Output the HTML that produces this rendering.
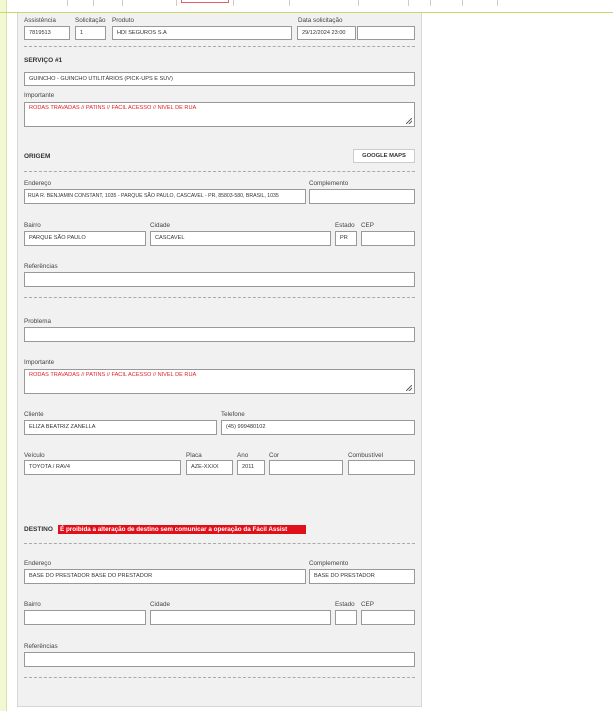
<!DOCTYPE html>
<html><head><meta charset="utf-8"><style>
*{margin:0;padding:0;box-sizing:border-box}
body{width:613px;height:711px;background:#fff;position:relative;overflow:hidden;font-family:"Liberation Sans",sans-serif;font-size:6.5px;color:#333}
.a{position:absolute}
.lbl{position:absolute;font-size:6.3px;color:#444;white-space:nowrap}
.in{position:absolute;background:#fff;border:1px solid #999;font-size:5.6px;color:#333;padding:0 0 0 4px;line-height:13px;white-space:nowrap;overflow:hidden}
.dash{position:absolute;left:24px;width:391px;border-top:1px dashed #aaa;height:0}
.h{position:absolute;font-weight:bold;font-size:6.5px;color:#333}
.red{color:#e0202a}
.grip{position:absolute;right:2px;bottom:2px;width:6px;height:6px;background:linear-gradient(135deg,transparent 45%,#666 45%,#666 55%,transparent 55%,transparent 70%,#666 70%,#666 80%,transparent 80%)}
</style></head><body>
<div class="a" style="left:0;top:0;width:7px;height:711px;background:#f2f8d2;border-right:1px solid #d8e0a8"></div>
<div class="a" style="left:0;top:12px;width:613px;height:1px;background:#c9d86a"></div>
<div class="a" style="left:181px;top:0;width:48px;height:3px;background:#fff;border:1px solid #e46060;border-top:none"></div>
<div class="a" style="left:67px;top:0;width:1px;height:6px;background:#ccc"></div>
<div class="a" style="left:93px;top:0;width:1px;height:6px;background:#ccc"></div>
<div class="a" style="left:122px;top:0;width:1px;height:6px;background:#ccc"></div>
<div class="a" style="left:176px;top:0;width:1px;height:6px;background:#ccc"></div>
<div class="a" style="left:233px;top:0;width:1px;height:6px;background:#ccc"></div>
<div class="a" style="left:289px;top:0;width:1px;height:6px;background:#ccc"></div>
<div class="a" style="left:358px;top:0;width:1px;height:6px;background:#ccc"></div>
<div class="a" style="left:408px;top:0;width:1px;height:6px;background:#ccc"></div>
<div class="a" style="left:430px;top:0;width:1px;height:6px;background:#ccc"></div>
<div class="a" style="left:462px;top:0;width:1px;height:6px;background:#ccc"></div>
<div class="a" style="left:497px;top:0;width:1px;height:6px;background:#ccc"></div>
<div class="a" style="left:17px;top:13px;width:405px;height:694px;background:#f1f1f1;border:1px solid #d6d6d6;border-top:none"></div>

<div class="lbl" style="left:24px;top:17px">Assistência</div>
<div class="lbl" style="left:75px;top:17px">Solicitação</div>
<div class="lbl" style="left:112px;top:17px">Produto</div>
<div class="lbl" style="left:298px;top:17px">Data solicitação</div>
<div class="in" style="left:24px;top:26px;width:46px;height:14px">7819513</div>
<div class="in" style="left:75px;top:26px;width:31px;height:14px">1</div>
<div class="in" style="left:112px;top:26px;width:180px;height:14px">HDI SEGUROS S.A</div>
<div class="in" style="left:297px;top:26px;width:59px;height:14px">29/12/2024 23:00</div>
<div class="in" style="left:357px;top:26px;width:58px;height:14px"></div>
<div class="dash" style="top:46px"></div>
<div class="h" style="left:24px;top:57px">SERVIÇO #1</div>
<div class="in" style="left:24px;top:72px;width:391px;height:14px">GUINCHO - GUINCHO UTILITÁRIOS (PICK-UPS E SUV)</div>
<div class="lbl" style="left:24px;top:92px">Importante</div>
<div class="in red" style="left:24px;top:102px;width:391px;height:25px;line-height:10px">RODAS TRAVADAS // PATINS // FACIL ACESSO // NIVEL DE RUA<div class="grip"></div></div>
<div class="h" style="left:24px;top:153px">ORIGEM</div>
<div class="a" style="left:353px;top:149px;width:62px;height:14px;background:#fff;border:1px solid #ccc;font-weight:bold;font-size:5.8px;text-align:center;line-height:12px">GOOGLE MAPS</div>
<div class="dash" style="top:171px"></div>
<div class="lbl" style="left:24px;top:180px">Endereço</div>
<div class="lbl" style="left:309px;top:180px">Complemento</div>
<div class="in" style="left:24px;top:189px;width:282px;height:15px;font-size:5.2px;padding-left:3px">RUA R. BENJAMIN CONSTANT, 1035 - PARQUE SÃO PAULO, CASCAVEL - PR, 85803-580, BRASIL, 1035</div>
<div class="in" style="left:309px;top:189px;width:106px;height:15px"></div>
<div class="lbl" style="left:24px;top:222px">Bairro</div>
<div class="lbl" style="left:150px;top:222px">Cidade</div>
<div class="lbl" style="left:335px;top:222px">Estado</div>
<div class="lbl" style="left:361px;top:222px">CEP</div>
<div class="in" style="left:24px;top:231px;width:122px;height:15px">PARQUE SÃO PAULO</div>
<div class="in" style="left:150px;top:231px;width:181px;height:15px">CASCAVEL</div>
<div class="in" style="left:335px;top:231px;width:22px;height:15px">PR</div>
<div class="in" style="left:361px;top:231px;width:54px;height:15px"></div>
<div class="lbl" style="left:24px;top:263px">Referências</div>
<div class="in" style="left:24px;top:272px;width:391px;height:15px"></div>
<div class="dash" style="top:297px"></div>
<div class="lbl" style="left:24px;top:318px">Problema</div>
<div class="in" style="left:24px;top:327px;width:391px;height:15px"></div>
<div class="lbl" style="left:24px;top:359px">Importante</div>
<div class="in red" style="left:24px;top:369px;width:391px;height:25px;line-height:10px">RODAS TRAVADAS // PATINS // FACIL ACESSO // NIVEL DE RUA<div class="grip"></div></div>
<div class="lbl" style="left:24px;top:411px">Cliente</div>
<div class="lbl" style="left:221px;top:411px">Telefone</div>
<div class="in" style="left:24px;top:420px;width:193px;height:15px">ELIZA BEATRIZ ZANELLA</div>
<div class="in" style="left:221px;top:420px;width:194px;height:15px">(45) 999480102</div>
<div class="lbl" style="left:24px;top:452px">Veículo</div>
<div class="lbl" style="left:186px;top:452px">Placa</div>
<div class="lbl" style="left:237px;top:452px">Ano</div>
<div class="lbl" style="left:269px;top:452px">Cor</div>
<div class="lbl" style="left:348px;top:452px">Combustível</div>
<div class="in" style="left:24px;top:460px;width:157px;height:15px">TOYOTA / RAV4</div>
<div class="in" style="left:186px;top:460px;width:47px;height:15px">AZE-XXXX</div>
<div class="in" style="left:237px;top:460px;width:28px;height:15px">2011</div>
<div class="in" style="left:269px;top:460px;width:74px;height:15px"></div>
<div class="in" style="left:348px;top:460px;width:67px;height:15px"></div>
<div class="h" style="left:24px;top:526px">DESTINO</div>
<div class="a" style="left:58px;top:525px;width:248px;height:9px;background:#e0101a;color:#fff;font-weight:bold;font-size:6.3px;line-height:9px;padding-left:2px;white-space:nowrap;overflow:hidden">É proibida a alteração de destino sem comunicar a operação da Fácil Assist</div>
<div class="dash" style="top:543px"></div>
<div class="lbl" style="left:24px;top:560px">Endereço</div>
<div class="lbl" style="left:309px;top:560px">Complemento</div>
<div class="in" style="left:24px;top:569px;width:282px;height:15px">BASE DO PRESTADOR BASE DO PRESTADOR</div>
<div class="in" style="left:309px;top:569px;width:106px;height:15px">BASE DO PRESTADOR</div>
<div class="lbl" style="left:24px;top:601px">Bairro</div>
<div class="lbl" style="left:150px;top:601px">Cidade</div>
<div class="lbl" style="left:335px;top:601px">Estado</div>
<div class="lbl" style="left:361px;top:601px">CEP</div>
<div class="in" style="left:24px;top:610px;width:122px;height:15px"></div>
<div class="in" style="left:150px;top:610px;width:181px;height:15px"></div>
<div class="in" style="left:335px;top:610px;width:22px;height:15px"></div>
<div class="in" style="left:361px;top:610px;width:54px;height:15px"></div>
<div class="lbl" style="left:24px;top:643px">Referências</div>
<div class="in" style="left:24px;top:652px;width:391px;height:15px"></div>
<div class="dash" style="top:677px"></div>
</body></html>
